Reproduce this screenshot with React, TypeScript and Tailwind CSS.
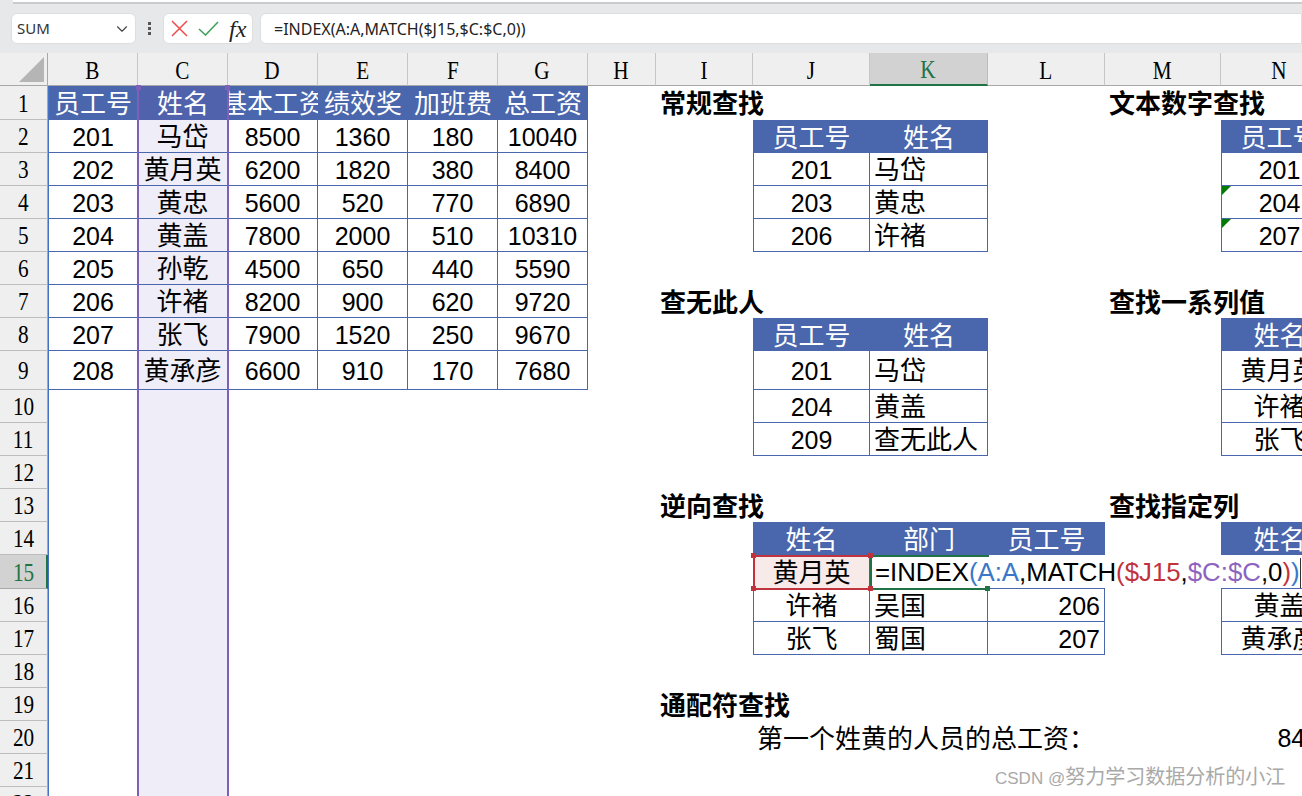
import React from 'react';
import { ChevronDown } from 'lucide-react';

const COLS = ['B', 'C', 'D', 'E', 'F', 'G', 'H', 'I', 'J', 'K', 'L', 'M', 'N'];
const ROW_COUNT = 22;

const HEAD = 'bg-[#4a66ac] text-white justify-center';
const BOX = 'border-r border-b border-[#4a66ac]';
const ALIGN: Record<string, string> = {
  c: 'justify-center',
  l: 'justify-start pl-1',
  r: 'justify-end pr-1',
};

type Cell = { text?: React.ReactNode; cls: string };
const cells: Record<string, Cell> = {};

const put = (ref: string, text: React.ReactNode, cls = '') => {
  cells[ref] = { text, cls };
};

// writes a header row and its body rows, starting at a cell
const table = (col: string, row: number, head: string[], rows: React.ReactNode[][], align: string[]) => {
  const start = COLS.indexOf(col);
  head.forEach((h, i) => put(`${COLS[start + i]}${row}`, h, HEAD));
  rows.forEach((r, y) =>
    r.forEach((v, i) => {
      const first = i === 0 ? 'border-l border-[#4a66ac]' : '';
      put(`${COLS[start + i]}${row + y + 1}`, v, `${BOX} ${first} ${ALIGN[align[i]]}`);
    }),
  );
};

const Flag = ({ text }: { text: string }) => (
  <>
    <svg className="absolute left-0 top-0" width="9" height="9" viewBox="0 0 9 9">
      <polygon points="0,0 9,0 0,9" fill="#047a04" />
    </svg>
    <span className="text-[25px]">{text}</span>
  </>
);

const Title = ({ text }: { text: string }) => <span className="font-bold">{text}</span>;

const Formula = () => (
  <span className="flex h-[30px] items-center border-r border-[#333] text-[25.8px]">
    =INDEX
    <span className="text-[#3b78c9]">(A:A</span>,MATCH
    <span className="text-[#c0323c]">($J15</span>,<span className="text-[#8d63c0]">$C:$C</span>,0
    <span className="text-[#c0323c]">)</span>
    <span className="text-[#3b78c9]">)</span>
  </span>
);

table(
  'B',
  1,
  ['员工号', '姓名', '基本工资', '绩效奖', '加班费', '总工资'],
  [
    ['201', '马岱', '8500', '1360', '180', '10040'],
    ['202', '黄月英', '6200', '1820', '380', '8400'],
    ['203', '黄忠', '5600', '520', '770', '6890'],
    ['204', '黄盖', '7800', '2000', '510', '10310'],
    ['205', '孙乾', '4500', '650', '440', '5590'],
    ['206', '许褚', '8200', '900', '620', '9720'],
    ['207', '张飞', '7900', '1520', '250', '9670'],
    ['208', '黄承彦', '6600', '910', '170', '7680'],
  ],
  ['c', 'c', 'c', 'c', 'c', 'c'],
);
cells.C1.cls = 'bg-[#5062ac] text-white justify-center';
cells.D1.cls = `${HEAD} overflow-hidden`;
for (let r = 2; r <= ROW_COUNT; r++) {
  const cur = cells[`C${r}`];
  cells[`C${r}`] = { text: cur?.text, cls: `${cur?.cls ?? ''} bg-[#efedf7]` };
}

put('I1', <Title text="常规查找" />, ALIGN.l);
table('J', 2, ['员工号', '姓名'], [['201', '马岱'], ['203', '黄忠'], ['206', '许褚']], ['c', 'l']);

put('M1', <Title text="文本数字查找" />, ALIGN.l);
table(
  'N',
  2,
  ['员工号'],
  [['201'], [<Flag key="a" text="204" />], [<Flag key="b" text="207" />]],
  ['c'],
);

put('I7', <Title text="查无此人" />, ALIGN.l);
table('J', 8, ['员工号', '姓名'], [['201', '马岱'], ['204', '黄盖'], ['209', '查无此人']], ['c', 'l']);

put('M7', <Title text="查找一系列值" />, ALIGN.l);
table('N', 8, ['姓名'], [['黄月英'], ['许褚'], ['张飞']], ['c']);

put('I13', <Title text="逆向查找" />, ALIGN.l);
table(
  'J',
  14,
  ['姓名', '部门', '员工号'],
  [
    ['黄月英', <Formula key="f" />, ''],
    ['许褚', '吴国', '206'],
    ['张飞', '蜀国', '207'],
  ],
  ['c', 'l', 'r'],
);
cells.J15.cls = 'justify-center bg-[#f9eaea]';
cells.K15.cls = 'justify-start pl-[5px]';
cells.L15.cls = 'border-b border-[#4a66ac]';

put('M13', <Title text="查找指定列" />, ALIGN.l);
table('N', 14, ['姓名'], [[''], ['黄盖'], ['黄承彦']], ['c']);
cells.N15.cls = 'border-b border-[#4a66ac]';

put('I19', <Title text="通配符查找" />, ALIGN.l);
put('J20', '第一个姓黄的人员的总工资：', ALIGN.l);
put('N20', '8400', 'justify-end pr-[5px]');

const HeaderLabel = ({ text }: { text: string }) => (
  <span className="inline-block scale-x-[0.85] font-['Liberation_Serif',serif] text-[25px] leading-none">{text}</span>
);

const ColumnHeaders = () => (
  <>
    <div className="flex items-end justify-end border-r border-b border-[#a8a8a8] bg-[#efefef] pr-[3px] pb-[3px]">
      <svg width="25" height="25" viewBox="0 0 25 25">
        <polygon points="25,0 25,25 0,25" fill="#b5b5b5" />
      </svg>
    </div>
    {COLS.map((c) => (
      <div
        key={c}
        className={
          c === 'K'
            ? 'flex items-center justify-center border-r border-b-2 border-r-[#bdbdbd] border-b-[#217346] bg-[#d2d2d2] pt-[2px] text-[#217346]'
            : 'flex items-center justify-center border-r border-b border-r-[#c6c6c6] border-b-[#a8a8a8] bg-[#efefef] pt-[2px] text-black'
        }
      >
        <HeaderLabel text={c} />
      </div>
    ))}
  </>
);

const Sheet = () => {
  const rows = Array.from({ length: ROW_COUNT }, (_, i) => i + 1);
  return (
    <div className="relative h-[743px] overflow-hidden bg-white">
      <div className="grid w-[1338px] grid-cols-[48px_90px_90px_90px_90px_90px_90px_68px_97px_117px_118px_117px_116px_117px] grid-rows-[33px_34px_33px_33px_33px_33px_33px_33px_33px_39px_33px_33px_33px_33px_33px_34px_33px_33px_33px_33px_33px_33px_33px] font-['Liberation_Sans','Noto_Sans_CJK_SC',sans-serif] text-[26px] leading-none text-black">
        <ColumnHeaders />
        {rows.map((r) => (
          <React.Fragment key={r}>
            <div
              className={
                r === 15
                  ? 'flex items-center justify-center border-r-2 border-b border-r-[#217346] border-b-[#a8a8a8] bg-[#d2d2d2] pt-px text-[#217346]'
                  : 'flex items-center justify-center border-r border-b border-r-[#a8a8a8] border-b-[#bdbdbd] bg-[#efefef] pt-px text-black'
              }
            >
              <HeaderLabel text={String(r)} />
            </div>
            {COLS.map((c) => {
              const cell = cells[`${c}${r}`];
              const digits = typeof cell?.text === 'string' && /^\d+$/.test(cell.text);
              return (
                <div
                  key={c}
                  className={`relative flex items-center pt-[2px] whitespace-nowrap ${digits ? 'text-[25px]' : ''} ${cell?.cls ?? ''}`}
                >
                  {cell?.text}
                </div>
              );
            })}
          </React.Fragment>
        ))}
      </div>

      {/* reference colours drawn over the sheet while the formula is edited */}
      <div className="absolute top-[33px] bottom-0 left-[48px] w-px bg-[#4472c4]" />
      <div className="absolute top-[33px] bottom-0 left-[137px] w-[92px] border-x-2 border-[#7e60b8]">
        <div className="absolute -top-px -left-[3px] h-[5px] w-[5px] bg-[#7e60b8]" />
        <div className="absolute -top-px -right-[3px] h-[5px] w-[5px] bg-[#7e60b8]" />
      </div>

      <div className="absolute top-[502px] left-[753px] h-[35px] w-[118px] border-2 border-[#c0323c]" />
      <div className="absolute top-[502px] left-[870px] h-[35px] w-[119px] border-y-2 border-l-2 border-[#217346]">
        <div className="absolute -right-px -bottom-[3px] h-[5px] w-[5px] bg-[#217346]" />
      </div>
      <div className="absolute top-[500px] left-[751px] h-[5px] w-[5px] bg-[#c0323c]" />
      <div className="absolute top-[500px] left-[868px] h-[5px] w-[5px] bg-[#c0323c]" />
      <div className="absolute top-[533px] left-[751px] h-[5px] w-[5px] bg-[#c0323c]" />
      <div className="absolute top-[533px] left-[868px] h-[5px] w-[5px] bg-[#c0323c]" />

      <div className="absolute top-[714px] left-[995px] font-['Liberation_Sans','Noto_Sans_CJK_SC',sans-serif] text-[20px] leading-5 whitespace-nowrap text-[#a9a9a9]">
        <span className="text-[17px]">CSDN @</span>努力学习数据分析的小江
      </div>
    </div>
  );
};

const FormulaBar = () => (
  <div className="h-[53px] bg-[#e6e8ea]">
    <div className="ml-[13px] h-1 border-b-2 border-[#c9cbcd] bg-white" />
    <div className="flex items-stretch pt-[9px] pl-[11px] font-['Noto_Sans',sans-serif] text-[#333]">
      <div className="flex h-[31px] w-[125px] items-center justify-between rounded-md border border-[#dcdee0] bg-white pr-1 pl-[5px] text-[15px]">
        <span>SUM</span>
        <ChevronDown className="h-[18px] w-[18px] text-[#444]" strokeWidth={1.5} />
      </div>
      <div className="flex w-[27px] flex-col items-center justify-center gap-[2px]">
        <span className="h-[3px] w-[3px] bg-[#555]" />
        <span className="h-[3px] w-[3px] bg-[#555]" />
        <span className="h-[3px] w-[3px] bg-[#555]" />
      </div>
      <div className="flex h-[31px] w-[90px] items-center rounded-md border border-[#dcdee0] bg-white pl-[7px]">
        <svg width="17" height="17" viewBox="0 0 17 17">
          <path d="M1 1 L16 16 M16 1 L1 16" stroke="#ee4b4b" strokeWidth="1.5" fill="none" />
        </svg>
        <svg className="ml-[10px]" width="21" height="15" viewBox="0 0 21 15">
          <path d="M1 8 L7.5 14 L20 1" stroke="#3fa35a" strokeWidth="1.6" fill="none" />
        </svg>
        <span className="ml-[10px] font-['Liberation_Serif',serif] text-[24px] leading-none text-[#222] italic">fx</span>
      </div>
      <div className="ml-[7px] flex h-[31px] flex-1 items-center rounded-l-md border border-[#dcdee0] bg-white pl-[13px] text-[16px] whitespace-nowrap text-[#222]">
        =INDEX(A:A,MATCH($J15,$C:$C,0))
      </div>
    </div>
  </div>
);

export default function App() {
  return (
    <div className="h-[796px] w-[1302px] overflow-hidden bg-white">
      <FormulaBar />
      <Sheet />
    </div>
  );
}
